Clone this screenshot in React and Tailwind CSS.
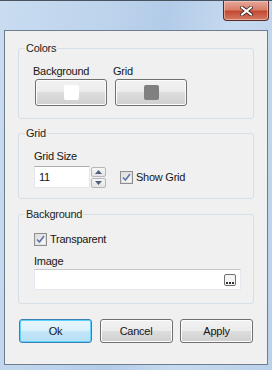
import React from "react";

const btnGray =
  "rounded-[3px] border border-[#707070] bg-[linear-gradient(to_bottom,#f2f2f2_0%,#ebebeb_50%,#dddddd_50%,#cfcfcf_100%)] shadow-[inset_0_0_0_1px_#fcfcfc]";

function CheckBox() {
  return (
    <div className="w-[13px] h-[13px] border border-[#8e8f8f] bg-[#f4f4f4] flex items-center justify-center shrink-0">
      <div className="w-[11px] h-[11px] border border-[#e0e0e0] bg-[linear-gradient(to_bottom_right,#dcdcdc,#fbfbfb)] flex items-center justify-center">
        <svg width="9" height="9" viewBox="0 0 9 9">
          <path d="M1 4.5 L3.5 7 L8 1" fill="none" stroke="#6077a8" strokeWidth="1.7" />
        </svg>
      </div>
    </div>
  );
}

function Legend({ children }) {
  return (
    <legend className="ml-[6px] px-[1px] leading-[14px] text-[#1e1e1e]">{children}</legend>
  );
}

const fieldset = "border border-[#d5dfe5] rounded-[3px] min-w-0";

export default function App() {
  return (
    <div
      className="w-[272px] h-[370px] flex flex-col border-t border-t-[#4a5461] bg-[linear-gradient(100deg,#c9dcf0_0%,#bcd3ec_35%,#b2cbe8_50%,#c6daef_70%,#bad1ea_100%)] text-[11px] tracking-[-0.25px] text-[#151515]"
      style={{ fontFamily: '"Liberation Sans", Arial, sans-serif' }}
    >
      <div className="h-[29px] flex justify-end pr-[3px] shrink-0">
        <div className="w-[46px] h-[20px] rounded-b-[4px] border border-t-0 border-[#5c2a24] bg-[linear-gradient(to_bottom,#e6a89a_0%,#d8806c_45%,#c44a33_55%,#d27a63_100%)] shadow-[inset_0_0_0_1px_rgba(255,220,210,0.5)] flex items-center justify-center">
          <svg width="13" height="10" viewBox="0 0 13 10">
            <path d="M2 1.5 L11 8.5 M11 1.5 L2 8.5" stroke="#3a2020" strokeWidth="3.6" strokeLinecap="square" />
            <path d="M2 1.5 L11 8.5 M11 1.5 L2 8.5" stroke="#ffffff" strokeWidth="2" strokeLinecap="square" />
          </svg>
        </div>
      </div>
      <div className="mx-[4px] h-[335px] border border-[#6f7d8e] bg-[#f0f0f0] flex flex-col px-[13px] pt-[10px]">
        {/* Colors */}
        <fieldset className={`${fieldset} pb-[12px]`}>
          <Legend>Colors</Legend>
          <div className="flex pl-[14px] pt-[9px]">
            <div className="w-[80px] flex flex-col">
              <div className="leading-[14px]">Background</div>
              <div className={`${btnGray} ml-[2px] mt-[1px] w-[72px] h-[27px] flex items-center justify-center`}>
                <div className="w-[15px] h-[15px] rounded-[2px] bg-white" />
              </div>
            </div>
            <div className="flex flex-col">
              <div className="leading-[14px]">Grid</div>
              <div className={`${btnGray} ml-[2px] mt-[1px] w-[72px] h-[27px] flex items-center justify-center`}>
                <div className="w-[15px] h-[15px] rounded-[2px] bg-[#808080]" />
              </div>
            </div>
          </div>
        </fieldset>

        {/* Grid */}
        <fieldset className={`${fieldset} mt-[7px] pb-[10px]`}>
          <Legend>Grid</Legend>
          <div className="flex flex-col pl-[15px] pt-[9px]">
            <div className="leading-[14px]">Grid Size</div>
            <div className="flex items-center mt-[3px]">
              <div className="w-[56px] h-[22px] bg-white border border-[#e3e9ef] border-t-[#abadb3] flex items-center pl-[4px] leading-[14px]">
                11
              </div>
              <div className="ml-[1px] flex flex-col gap-[1px]">
                <div className="w-[15px] h-[10px] border border-[#b4b8be] rounded-[2px] bg-[linear-gradient(to_bottom,#f6f6f6,#e4e4e4)] flex items-center justify-center">
                  <svg width="7" height="4" viewBox="0 0 7 4"><path d="M0 4 L3.5 0 L7 4 Z" fill="#4d6185" /></svg>
                </div>
                <div className="w-[15px] h-[10px] border border-[#b4b8be] rounded-[2px] bg-[linear-gradient(to_bottom,#f6f6f6,#e4e4e4)] flex items-center justify-center">
                  <svg width="7" height="4" viewBox="0 0 7 4"><path d="M0 0 L3.5 4 L7 0 Z" fill="#4d6185" /></svg>
                </div>
              </div>
              <div className="ml-[14px] flex items-center gap-[3px]">
                <CheckBox />
                <span className="leading-[14px]">Show Grid</span>
              </div>
            </div>
          </div>
        </fieldset>

        {/* Background */}
        <fieldset className={`${fieldset} mt-[8px] pb-[13px]`}>
          <Legend>Background</Legend>
          <div className="flex flex-col pl-[15px] pt-[11px]">
            <div className="flex items-center gap-[3px] h-[14px]">
              <CheckBox />
              <span className="leading-[14px]">Transparent</span>
            </div>
            <div className="leading-[14px] mt-[8px]">Image</div>
            <div className="mt-[1px] w-[207px] h-[21px] bg-white border border-[#e3e9ef] border-t-[#c5c8cd] flex items-center justify-end pr-[4px]">
              <div className="w-[12px] h-[12px] border border-[#707070] rounded-[2px] bg-[#f4f4f4] flex items-end justify-center gap-[1px] pb-[1px]">
                <div className="w-[2px] h-[2px] bg-[#333]" />
                <div className="w-[2px] h-[2px] bg-[#333]" />
                <div className="w-[2px] h-[2px] bg-[#333]" />
              </div>
            </div>
          </div>
        </fieldset>

        {/* Buttons */}
        <div className="flex justify-between px-[1px] mt-[15px]">
          <div className="w-[73px] h-[24px] rounded-[3px] border border-[#3c7fb1] bg-[linear-gradient(to_bottom,#e8f5fc_0%,#dbf0fb_50%,#c4e6f8_50%,#b6dff5_100%)] shadow-[inset_0_0_0_1px_#5ad2fb] flex items-center justify-center leading-[14px]">
            Ok
          </div>
          <div className={`${btnGray} w-[73px] h-[24px] flex items-center justify-center leading-[14px]`}>
            Cancel
          </div>
          <div className={`${btnGray} w-[73px] h-[24px] flex items-center justify-center leading-[14px]`}>
            Apply
          </div>
        </div>
      </div>
    </div>
  );
}
